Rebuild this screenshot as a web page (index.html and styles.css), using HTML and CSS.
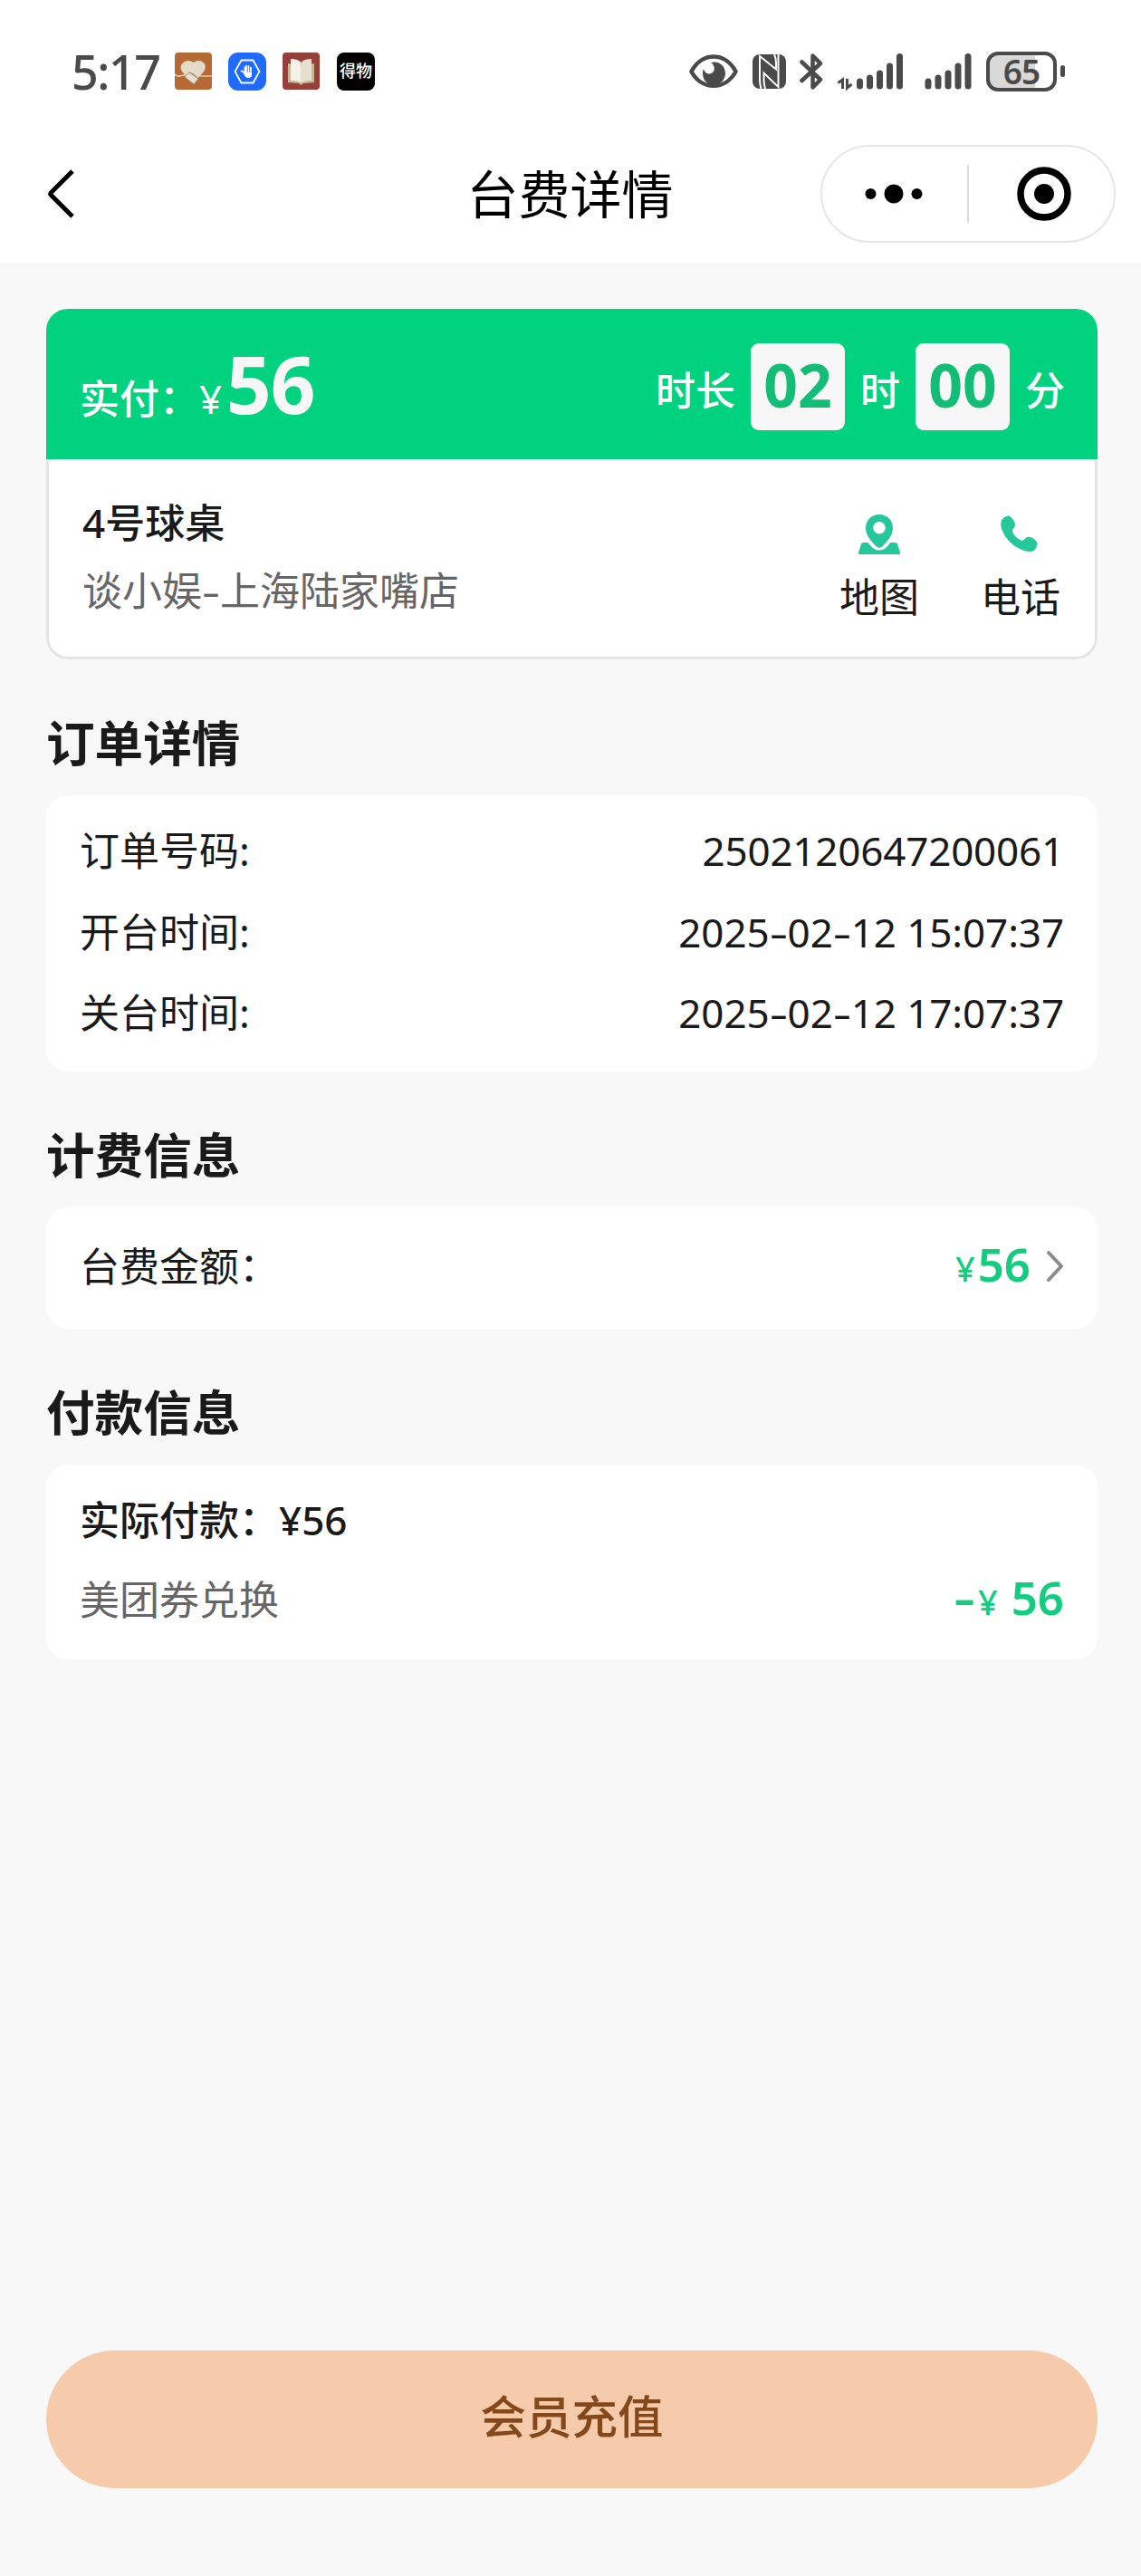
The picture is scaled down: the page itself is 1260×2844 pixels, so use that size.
FILE: index.html
```html
<!DOCTYPE html>
<html lang="zh-CN">
<head>
  <meta charset="UTF-8">
  <meta name="viewport" content="width=device-width, initial-scale=1.0">
  <title>台费详情</title>
  <link rel="stylesheet" href="styles.css">
</head>
<body>

  <div class="status-bar">
    <div class="status-left">
      <span class="clock">5:17</span>
      <svg class="app" width="41" height="41" viewBox="0 0 41 41">
        <rect width="41" height="41" rx="4" fill="#b56a35"/>
        <path d="M0 24c4 5 8 0 13 1M27 26h14" fill="none" stroke="#e0c9ae" stroke-width="1.6"/>
        <path d="M20.500 34L8 21c-5-8 5-16 12.500-10C28 5 38 13 32 21z" fill="#e3dbc9"/>
        <path d="M11 27l5-5 10 7-5 6zM16 22l5 2 5 5" fill="#e8e0cf" stroke="#a88c6c" stroke-width="1"/>
      </svg>
      <svg class="app" width="42" height="42" viewBox="0 0 42 42">
        <rect width="42" height="42" rx="11" fill="#1f6bff"/>
        <path d="M14.500 8.500h13L34.500 21l-7 12.500h-13L7.500 21z" fill="none" stroke="#fff" stroke-width="1.800"/>
        <path d="M14.500 20.500c1-.6 2 .5 4 3V16M20 23v-8.500M22.500 23v-8M25 23v-6.500" fill="none" stroke="#fff" stroke-width="1.700" stroke-linecap="round"/>
        <path d="M17.500 22H26v3c0 2-1.500 3-4 3s-3.500-2-4.500-4z" fill="#fff"/>
      </svg>
      <svg class="app" width="41" height="41" viewBox="0 0 41 41">
        <rect width="41" height="41" rx="4" fill="#96403a"/>
        <path d="M6 12l14 4 15-4v21l-12 1-2.500 2L18 34 6 33z" fill="#c9b795"/>
        <path d="M9 7c5 0 9 1 11.500 4v23C18 31 13 31 9 31z" fill="#f5f2ea"/>
        <path d="M32 7c-5 0-9 1-11.500 4v23c2.500-3 7.500-3 11.500-3z" fill="#e6dfd0"/>
      </svg>
      <span class="app-dewu">得物</span>
    </div>
    <div class="status-right">
      <svg class="eye" width="54" height="38" viewBox="0 0 54 38">
        <path d="M2.500 19C14-3 40-3 51.500 19C40 40 14 40 2.500 19z" fill="none" stroke="#4a4a4a" stroke-width="4.500" stroke-linejoin="round"/>
        <path d="M24 9c8-2.500 16 3 16 12 0 7-6 13-13 13S15 28 15 21c0-2 .3-3.500 1-5 1 4 4 6 7 5.500 4-.7 6-5 4-9-.6-1.500-1.500-2.500-3-3.500z" fill="#4a4a4a"/>
      </svg>
      <svg class="nfc" width="37" height="38" viewBox="0 0 37 38">
        <rect width="37" height="38" rx="8" fill="#4a4a4a"/>
        <path d="M9.500 38Q8 33 8 28V2l18 14.500V10Q26 4 24 0M28.500 0v36L12.500 20.500V28q0 6 1.500 10" fill="none" stroke="#fff" stroke-width="2"/>
      </svg>
      <svg class="bt" width="26" height="42" viewBox="0 0 26 42">
        <path d="M2.500 10.500L23 30l-8.500 8.500v-35L23 12 2.500 31" fill="none" stroke="#4a4a4a" stroke-width="4.500" stroke-linejoin="round" stroke-linecap="round"/>
      </svg>
      <svg class="signal-data" width="73" height="42" viewBox="0 0 73 42">
        <path d="M1.500 33.500L6.500 30v10M11.500 29v10l5-4" fill="none" stroke="#4a4a4a" stroke-width="3"/>
        <path d="M25.500 32v5M36.500 28v9M47.500 23v14M58.500 15v22M69.500 4.500V37" stroke="#4a4a4a" stroke-width="7" stroke-linecap="round"/>
      </svg>
      <svg class="signal" width="52" height="42" viewBox="0 0 52 42">
        <path d="M4 32v5M15 28v9M26 23v14M37 15v22M48 4.500V37" stroke="#4a4a4a" stroke-width="7" stroke-linecap="round"/>
      </svg>
      <div class="battery"><span>65</span></div>
      <i class="battery-cap"></i>
    </div>
  </div>

  <div class="nav">
    <svg class="back" width="32" height="56" viewBox="0 0 32 56">
      <path d="M29 3L5.500 26.500q-1.500 1.500 0 3L29 53" fill="none" stroke="#000" stroke-width="5"/>
    </svg>
    <h1>台费详情</h1>
    <div class="capsule">
      <svg width="64" height="24" viewBox="0 0 64 24">
        <circle cx="6.500" cy="12" r="6"/><circle cx="32" cy="12" r="10.500"/><circle cx="57.500" cy="12" r="6"/>
      </svg>
      <i class="divider"></i>
      <svg width="60" height="60" viewBox="0 0 60 60">
        <circle cx="30" cy="30" r="26" fill="none" stroke="#000" stroke-width="7.500"/><circle cx="30" cy="30" r="11"/>
      </svg>
    </div>
  </div>

  <main>
    <section class="summary">
      <div class="summary-top">
        <div class="paid">实付：<span class="yen">¥</span><b>56</b></div>
        <div class="duration">
          <span>时长</span><b>02</b><span>时</span><b>00</b><span>分</span>
        </div>
      </div>
      <div class="summary-body">
        <div class="table-info">
          <div class="table-name">4号球桌</div>
          <div class="shop">谈小娱<i class="dash">-</i>上海陆家嘴店</div>
        </div>
        <div class="action">
          <svg width="46" height="46" viewBox="0 0 46 46" fill="#26c79a">
            <path fill-rule="evenodd" d="M23 1C14.500 1 8 7.500 8 16c0 8 6 14.500 12 20.500q3 2.500 6 0C32 30.500 38 24 38 16 38 7.500 31.500 1 23 1zm0 8a6.800 6.800 0 1 1 0 13.600A6.800 6.800 0 0 1 23 9z"/>
            <path d="M5 32h5.500c3 3.500 6 8.500 12.500 8.500S32.500 35.500 35.500 32H41q1.500 0 2 1.500l3 9.500q.5 2-1.500 2h-43q-2 0-1.500-2l3-9.500Q3.500 32 5 32z"/>
          </svg>
          <span>地图</span>
        </div>
        <div class="action">
          <svg width="46" height="46" viewBox="0 0 46 46" fill="#26c79a">
            <path d="M4 5c3-2.500 7-3 9-.5 2 2.500 4 5 4 8 0 3.500-3.500 4-3 7 .8 4 6.500 9.500 10.500 10.200 3 .5 3.500-4 7-4 3 0 6.500 2 8.500 4.300 2 2 1.500 5.500-.5 9-2.500 4-9 3.500-15 1C14 36 6 27.500 2.500 18 .8 13 .5 8 4 5z"/>
          </svg>
          <span>电话</span>
        </div>
      </div>
    </section>

    <h2>订单详情</h2>
    <section class="card order">
      <div class="row"><span>订单号码:</span><span class="number">2502120647200061</span></div>
      <div class="row"><span>开台时间:</span><span class="time">2025<i class="dash">-</i>02<i class="dash">-</i>12 15:07:37</span></div>
      <div class="row"><span>关台时间:</span><span class="time">2025<i class="dash">-</i>02<i class="dash">-</i>12 17:07:37</span></div>
    </section>

    <h2>计费信息</h2>
    <section class="card fee">
      <div class="row">
        <span>台费金额：</span>
        <span class="amount">
          <small>¥</small><b>56</b>
          <svg width="20" height="36" viewBox="0 0 20 36">
            <path d="M3 3l14 15L3 33" fill="none" stroke="#8c8c8c" stroke-width="4" stroke-linecap="round" stroke-linejoin="round"/>
          </svg>
        </span>
      </div>
    </section>

    <h2>付款信息</h2>
    <section class="card pay">
      <div class="row actual"><span>实际付款：¥56</span></div>
      <div class="row coupon">
        <span>美团券兑换</span>
        <span class="amount"><i class="dash">-</i><small>¥</small><b>56</b></span>
      </div>
    </section>

    <button class="recharge">会员充值</button>
  </main>

</body>
</html>
```
FILE: styles.css
```css
* {
  box-sizing: border-box;
}

body {
  margin: 0;
  height: 2844px;
  display: flex;
  flex-direction: column;
  background: #f8f8f8;
  color: #1a1a1a;
  font-family: "Noto Sans", "Noto Sans CJK SC", sans-serif;
  font-size: 44px;
}

i {
  font-style: normal;
}

svg {
  display: block;
  flex: none;
}

/* status bar */
.status-bar {
  height: 145px;
  padding: 12px 84px 0 79px;
  display: flex;
  justify-content: space-between;
  align-items: center;
  background: #fff;
  color: #4a4a4a;
}

.status-left,
.status-right {
  display: flex;
  align-items: center;
}

.clock {
  width: 114px;
  font-size: 52px;
  font-weight: 500;
  line-height: 60px;
  letter-spacing: -1.500px;
}

.app {
  margin-right: 18px;
}

.app-dewu {
  width: 42px;
  height: 42px;
  margin-left: 1px;
  border-radius: 8px;
  background: #000;
  color: #fff;
  font-size: 18px;
  font-weight: 500;
  line-height: 41px;
  text-align: center;
}

.nfc { margin-left: 16px; }
.bt { margin-left: 15px; }
.signal-data { margin-left: 15px; }
.signal { margin-left: 24px; }

.battery {
  width: 78px;
  height: 44px;
  margin-left: 16px;
  border: 4px solid #4a4a4a;
  border-radius: 13px;
  background: linear-gradient(90deg, #d9d9d9 50px, #fff 50px);
  font-size: 37px;
  font-weight: 600;
  line-height: 35px;
  letter-spacing: -1px;
  text-align: center;
}

.battery-cap {
  width: 5px;
  height: 13px;
  margin-left: 4px;
  border-radius: 3px;
  background: #4a4a4a;
}

/* nav bar */
.nav {
  height: 145px;
  padding: 0 28px 7px 51px;
  display: grid;
  grid-template-columns: 326px 1fr 326px;
  align-items: center;
  background: #fff;
}

.nav h1 {
  margin: 0 24px 1px 0;
  color: #000;
  font-size: 57px;
  font-weight: 400;
  line-height: 80px;
  text-align: center;
  white-space: nowrap;
}

.capsule {
  height: 108px;
  border: 2px solid #e6e6e6;
  border-radius: 54px;
  display: flex;
  align-items: center;
  padding-left: 47px;
}

.divider {
  width: 2px;
  height: 64px;
  margin: 0 53px 0 49px;
  background: #dcdcdc;
}

main {
  flex: 1;
  display: flex;
  flex-direction: column;
  padding: 51px 48px 97px 51px;
}

/* summary card */
.summary {
  height: 387px;
  border-radius: 24px;
  overflow: hidden;
}

.summary-top {
  height: 166px;
  padding: 0 36px 0 37px;
  display: flex;
  justify-content: space-between;
  background: #00d27f;
  color: #fff;
}

.paid {
  padding-top: 32px;
  font-weight: 500;
  line-height: 100px;
}

.paid .yen {
  display: inline-block;
  width: 30px;
  font-weight: 400;
}

.paid b {
  color: #f7f7f7;
  font-size: 87px;
  line-height: 100px;
  letter-spacing: -1px;
}

.duration {
  display: flex;
  align-items: center;
  gap: 17px;
}

.duration span {
  font-weight: 500;
  line-height: 60px;
  padding-top: 14px;
}

.duration b {
  width: 104px;
  height: 96px;
  margin-top: 6px;
  border-radius: 9px;
  background: #f7f7f7;
  color: #14bd75;
  font-size: 66px;
  line-height: 91px;
  text-align: center;
}

.summary-body {
  height: 221px;
  padding: 36px 37px 0 37px;
  display: flex;
  border: 3px solid #e4e4e4;
  border-top: 0;
  border-radius: 0 0 24px 24px;
  background: #fff;
}

.table-info {
  flex: 1;
}

.table-name {
  font-weight: 500;
  line-height: 68px;
}

.shop {
  margin-top: 7px;
  color: #666;
  line-height: 68px;
}

/* wider than the font's own hyphen */
.dash {
  display: inline-block;
  width: 20px;
  text-align: center;
  transform: scaleX(1.45);
}

.action {
  padding-top: 24px;
  display: flex;
  flex-direction: column;
  align-items: center;
}

.action + .action {
  margin-left: 68px;
  margin-right: 1px;
}

.action span {
  margin-top: 12px;
  line-height: 68px;
}

/* sections */
h2 {
  margin: 54px 0 19px;
  font-size: 53.600px;
  font-weight: 600;
  line-height: 77px;
}

.card {
  padding: 0 37px;
  border-radius: 24px;
  background: #fff;
}

.row {
  display: flex;
  justify-content: space-between;
  align-items: center;
  line-height: 89.500px;
}

.order {
  height: 305px;
  padding-top: 17px;
}

.number {
  letter-spacing: -0.200px;
}

.time {
  letter-spacing: -0.100px;
}

.fee {
  height: 134px;
  padding-top: 18px;
}

.amount {
  display: flex;
  align-items: baseline;
  color: #14cc80;
  font-size: 51px;
}

.amount b {
  font-weight: 600;
}

.amount small {
  font-size: 38px;
  font-weight: 500;
}

.amount svg {
  align-self: center;
  margin-left: 17px;
}

.fee small {
  margin-right: 3px;
}

.pay {
  height: 215px;
  padding-top: 18px;
}

.actual {
  font-weight: 500;
  line-height: 86px;
}

.coupon {
  color: #666;
  line-height: 84px;
}

.coupon .dash {
  margin-right: 5px;
  font-weight: 600;
}

.coupon small {
  margin-right: 15px;
}

.recharge {
  height: 152px;
  margin-top: auto;
  padding: 0 0 12px;
  border: 0;
  border-radius: 76px;
  background: #f5cbab;
  color: #84481a;
  font-family: inherit;
  font-size: 50.500px;
  font-weight: 500;
}
```
